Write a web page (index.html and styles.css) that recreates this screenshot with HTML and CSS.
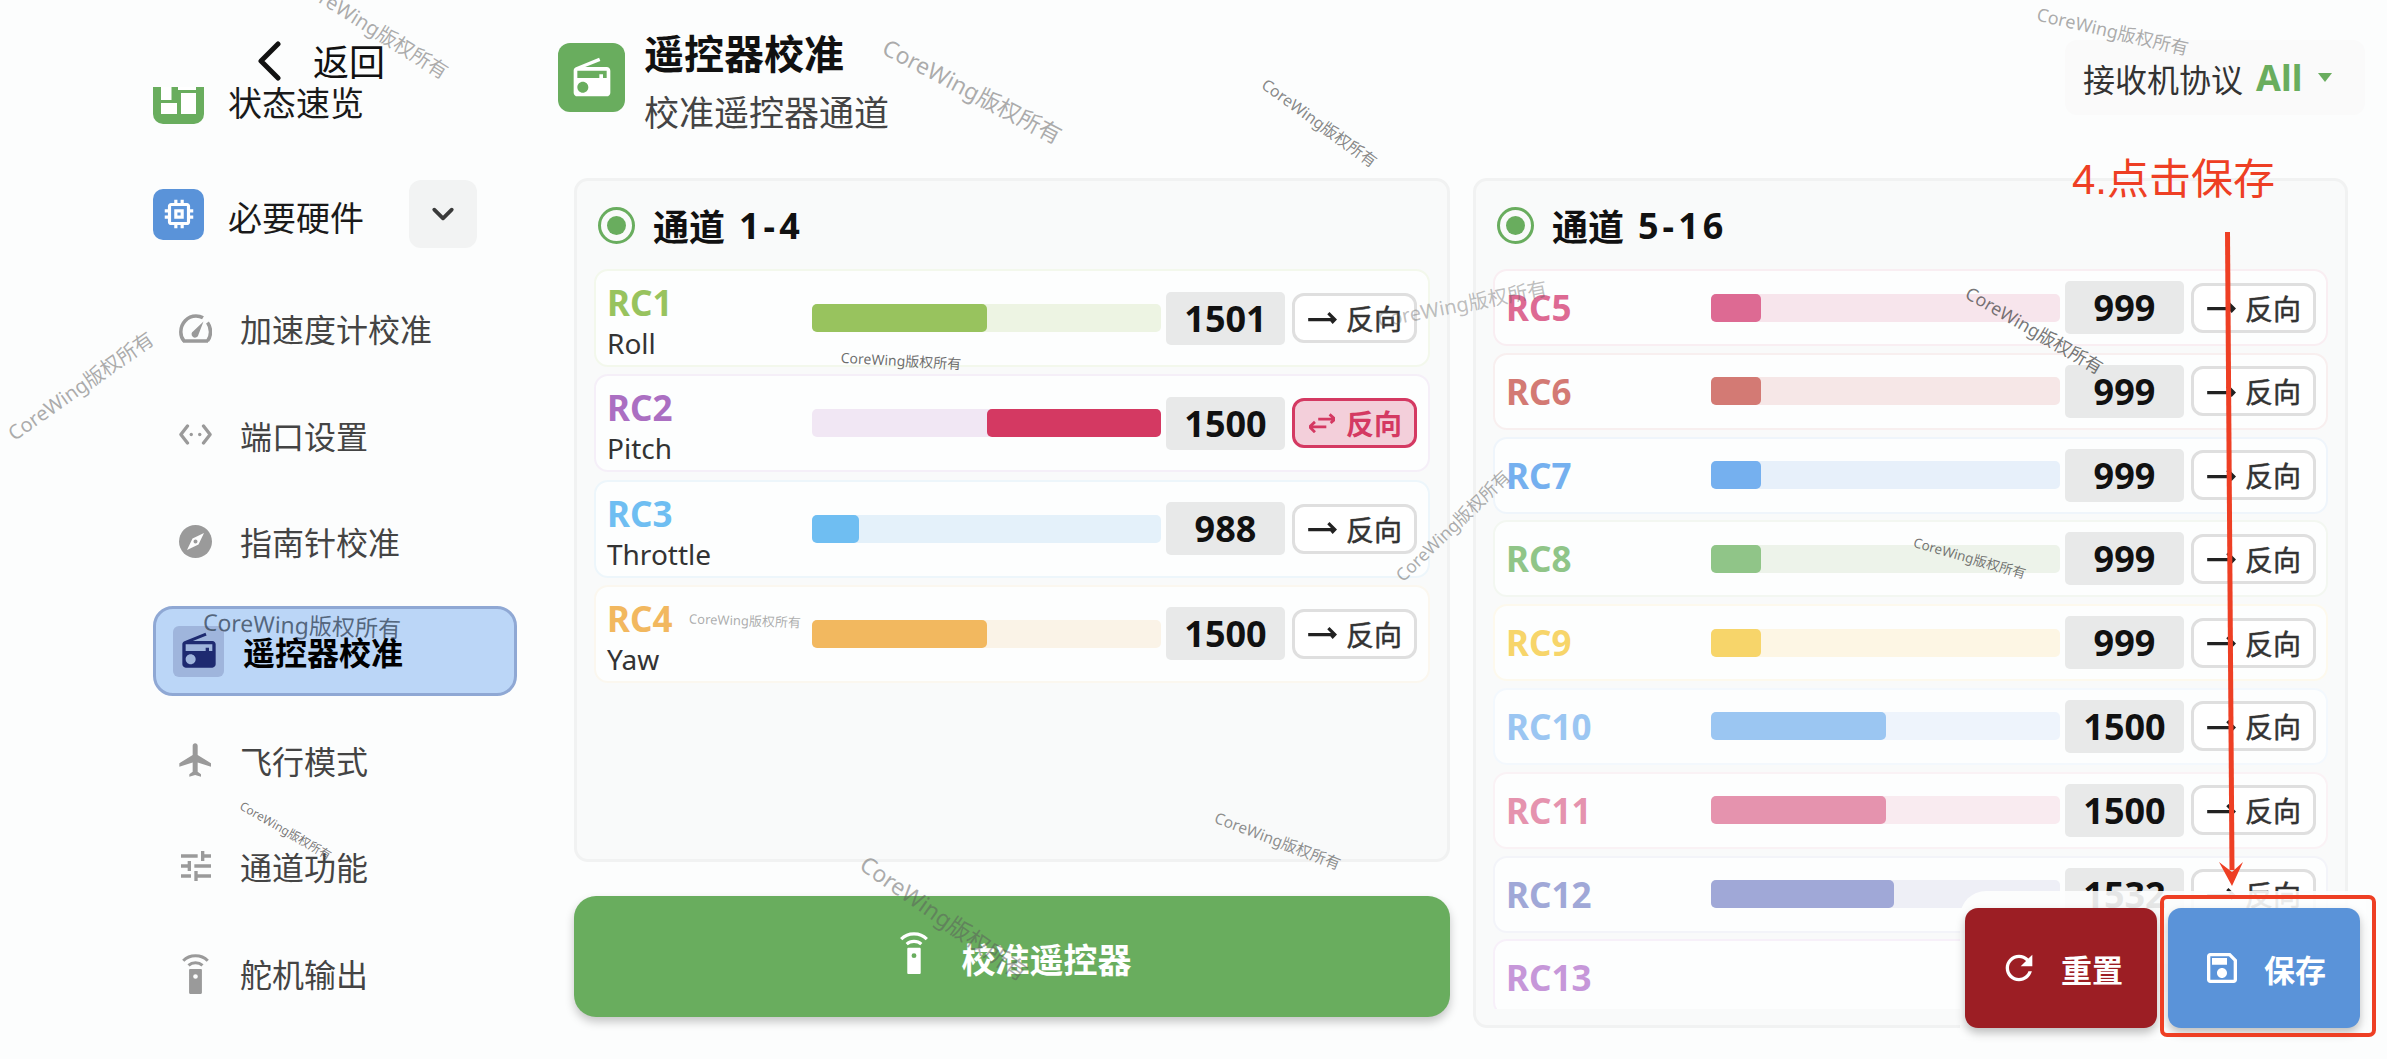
FILE: index.html

```html
<!DOCTYPE html>
<html lang="zh-CN">
<head>
    <meta charset="UTF-8">
    <title>遥控器校准</title>
    <link rel="stylesheet" href="styles.css">
</head>
<body>
<svg class="defs" width="0" height="0">
    <symbol id="radio" viewBox="0 0 24 24"><path fill="currentColor" d="M3.24 6.15C2.51 6.43 2 7.17 2 8v12c0 1.1.89 2 2 2h16c1.11 0 2-.9 2-2V8c0-1.11-.89-2-2-2H8.3l8.26-3.34L15.88 1 3.24 6.15zM7 20c-1.66 0-3-1.34-3-3s1.34-3 3-3 3 1.34 3 3-1.34 3-3 3zm13-8h-2v-2h-2v2H4V8h16v4z"/></symbol>
    <symbol id="remote" viewBox="0 0 24 36"><path fill="currentColor" d="M7.5 14.5h9c.6 0 1 .4 1 1V35c0 .6-.4 1-1 1h-9c-.6 0-1-.4-1-1V15.500c0-.6.4-1 1-1zM12 19a2 2 0 1 0 0 4 2 2 0 0 0 0-4z" fill-rule="evenodd"/><path fill="none" stroke="currentColor" stroke-width="2.6" d="M1.500 7.500C7 1.800 17 1.800 22.500 7.500M6 11.500c3.300-3 8.700-3 12 0"/></symbol>
    <symbol id="arrow" viewBox="0 0 28 16"><path fill="none" stroke="currentColor" stroke-width="3" d="M1 9h25M20 3l6 6-3 3"/></symbol>
</svg>

<div class="app">
    <aside class="sidebar">
        <div class="back">
            <svg class="back-icon" viewBox="0 0 24 40"><path fill="none" stroke="#111" stroke-width="5" stroke-linecap="round" stroke-linejoin="round" d="M21 3 4 20l17 17"/></svg>
            <span>返回</span>
        </div>
        <div class="side-scroll">
            <nav class="side-list">
                <div class="nav-top">
                    <span class="nav-badge green">
                        <svg viewBox="0 0 51 51"><path fill="#fff" d="M8 0h10.500v27H8zM25 0h18v17H25zM8 30h16v11H8zM28 20h15v21H28z"/></svg>
                    </span>
                    <span class="nav-name">状态速览</span>
                </div>
                <div class="nav-top">
                    <span class="nav-badge blue">
                        <svg viewBox="0 0 24 24"><path fill="#fff" d="M15 9H9v6h6V9zm-2 4h-2v-2h2v2zm8-2V9h-2V7c0-1.100-.9-2-2-2h-2V3h-2v2h-2V3H9v2H7c-1.100 0-2 .9-2 2v2H3v2h2v2H3v2h2v2c0 1.100.9 2 2 2h2v2h2v-2h2v2h2v-2h2c1.100 0 2-.9 2-2v-2h2v-2h-2v-2h2zm-4 6H7V7h10v10z"/></svg>
                    </span>
                    <span class="nav-name">必要硬件</span>
                    <span class="nav-toggle">
                        <svg viewBox="0 0 24 24" width="30" height="30"><path fill="none" stroke="#3a3a3a" stroke-width="3" stroke-linecap="round" stroke-linejoin="round" d="m5 8.500 7 7 7-7"/></svg>
                    </span>
                </div>
                <div class="sub-list">
                    <div class="nav-sub">
                        <svg viewBox="0 0 33 30"><path fill="none" stroke="#9a9a9a" stroke-width="3.500" d="M5 27.500C2.800 25 1.800 22 1.800 18.500 1.800 9.800 8.500 2.500 17 2.500c3 0 5 .6 7 1.800M28.500 9c1.800 2.500 3 5.800 3 9.500 0 3.500-1 6.500-3 9M4 27.500h25"/><path fill="#9a9a9a" d="M24.500 8 19.500 21a3.500 3.500 0 1 1-5-3.500z"/></svg>
                        <span>加速度计校准</span>
                    </div>
                    <div class="nav-sub">
                        <svg viewBox="0 0 35 24"><path fill="none" stroke="#9a9a9a" stroke-width="3.500" stroke-linecap="round" stroke-linejoin="round" d="M9 3 2 12l7 9M26 3l7 9-7 9"/><circle cx="13" cy="12" r="1.800" fill="#9a9a9a"/><circle cx="22" cy="12" r="1.800" fill="#9a9a9a"/></svg>
                        <span>端口设置</span>
                    </div>
                    <div class="nav-sub">
                        <svg viewBox="0 0 33 33"><circle cx="16.500" cy="16.500" r="16.500" fill="#9a9a9a"/><path fill="#fdfdfd" d="M25 8 19.500 19.500 8 25l5.500-11.500zM16.500 14.500a2 2 0 1 0 0 4 2 2 0 0 0 0-4z" fill-rule="evenodd"/></svg>
                        <span>指南针校准</span>
                    </div>
                    <div class="nav-sub active">
                        <span class="active-badge"><svg><use href="#radio"/></svg></span>
                        <span>遥控器校准</span>
                    </div>
                    <div class="nav-sub">
                        <svg class="big" viewBox="0 0 24 24"><path fill="#9a9a9a" d="M21 16v-2l-8-5V3.500c0-.83-.67-1.500-1.500-1.500S10 2.670 10 3.500V9l-8 5v2l8-2.500V19l-2 1.500V22l3.500-1 3.500 1v-1.500L13 19v-5.500l8 2.500z"/></svg>
                        <span>飞行模式</span>
                    </div>
                    <div class="nav-sub">
                        <svg class="big" viewBox="0 0 24 24"><path fill="#9a9a9a" d="M3 17v2h6v-2H3zM3 5v2h10V5H3zm10 16v-2h8v-2h-8v-2h-2v6h2zM7 9v2H3v2h4v2h2V9H7zm14 4v-2H11v2h10zm-6-4h2V7h4V5h-4V3h-2v6z"/></svg>
                        <span>通道功能</span>
                    </div>
                    <div class="nav-sub">
                        <svg class="remote-gray"><use href="#remote"/></svg>
                        <span>舵机输出</span>
                    </div>
                </div>
            </nav>
        </div>
    </aside>

    <main class="main">
        <header class="page-head">
            <div class="head-left">
                <span class="head-badge"><svg><use href="#radio"/></svg></span>
                <div class="head-text">
                    <h1>遥控器校准</h1>
                    <p>校准遥控器通道</p>
                </div>
            </div>
            <div class="protocol">
                <span>接收机协议</span>
                <b>All</b>
                <i class="caret"></i>
            </div>
        </header>

        <div class="columns">
            <div class="col-left">
                <section class="panel panel-left">
                    <h2 class="panel-title"><span class="ring"></span>通道<span class="nums">1-4</span></h2>
                    <div class="rows rows-main">
                        <div class="row rc1 tall">
                            <div class="label"><b>RC1</b><span>Roll</span></div>
                            <div class="track"><div class="fill" style="width:50%"></div></div>
                            <div class="value">1501</div>
                            <div class="rev-btn"><svg class="arrow"><use href="#arrow"/></svg>反向</div>
                        </div>
                        <div class="row rc2 tall">
                            <div class="label"><b>RC2</b><span>Pitch</span></div>
                            <div class="track flipped"><div class="fill" style="width:50%"></div></div>
                            <div class="value">1500</div>
                            <div class="rev-btn on">
                                <svg class="arrow" viewBox="0 0 24 18"><path fill="none" stroke="currentColor" stroke-width="2.600" d="M8.500 5.500H24M19 1l5 4.500-4 3.500M.5 12.500H16M5.500 8 .5 12.500l5 5"/></svg>反向
                            </div>
                        </div>
                        <div class="row rc3 tall">
                            <div class="label"><b>RC3</b><span>Throttle</span></div>
                            <div class="track"><div class="fill" style="width:13.400%"></div></div>
                            <div class="value">988</div>
                            <div class="rev-btn"><svg class="arrow"><use href="#arrow"/></svg>反向</div>
                        </div>
                        <div class="row rc4 tall">
                            <div class="label"><b>RC4</b><span>Yaw</span></div>
                            <div class="track"><div class="fill" style="width:50%"></div></div>
                            <div class="value">1500</div>
                            <div class="rev-btn"><svg class="arrow"><use href="#arrow"/></svg>反向</div>
                        </div>
                    </div>
                </section>
                <div class="calibrate"><svg><use href="#remote"/></svg><span>校准遥控器</span></div>
            </div>

            <section class="panel panel-right">
                <h2 class="panel-title"><span class="ring"></span>通道<span class="nums">5-16</span></h2>
                <div class="rows rows-scroll">
                    <div class="row rc5"><div class="label"><b>RC5</b></div><div class="track"><div class="fill" style="width:14.200%"></div></div><div class="value">999</div><div class="rev-btn"><svg class="arrow"><use href="#arrow"/></svg>反向</div></div>
                    <div class="row rc6"><div class="label"><b>RC6</b></div><div class="track"><div class="fill" style="width:14.200%"></div></div><div class="value">999</div><div class="rev-btn"><svg class="arrow"><use href="#arrow"/></svg>反向</div></div>
                    <div class="row rc7"><div class="label"><b>RC7</b></div><div class="track"><div class="fill" style="width:14.200%"></div></div><div class="value">999</div><div class="rev-btn"><svg class="arrow"><use href="#arrow"/></svg>反向</div></div>
                    <div class="row rc8"><div class="label"><b>RC8</b></div><div class="track"><div class="fill" style="width:14.200%"></div></div><div class="value">999</div><div class="rev-btn"><svg class="arrow"><use href="#arrow"/></svg>反向</div></div>
                    <div class="row rc9"><div class="label"><b>RC9</b></div><div class="track"><div class="fill" style="width:14.200%"></div></div><div class="value">999</div><div class="rev-btn"><svg class="arrow"><use href="#arrow"/></svg>反向</div></div>
                    <div class="row rc10"><div class="label"><b>RC10</b></div><div class="track"><div class="fill" style="width:50%"></div></div><div class="value">1500</div><div class="rev-btn"><svg class="arrow"><use href="#arrow"/></svg>反向</div></div>
                    <div class="row rc11"><div class="label"><b>RC11</b></div><div class="track"><div class="fill" style="width:50%"></div></div><div class="value">1500</div><div class="rev-btn"><svg class="arrow"><use href="#arrow"/></svg>反向</div></div>
                    <div class="row rc12"><div class="label"><b>RC12</b></div><div class="track"><div class="fill" style="width:52.400%"></div></div><div class="value">1532</div><div class="rev-btn"><svg class="arrow"><use href="#arrow"/></svg>反向</div></div>
                    <div class="row rc13"><div class="label"><b>RC13</b></div><div class="track"><div class="fill" style="width:5.700%"></div></div></div>
                </div>
            </section>
        </div>
    </main>

    <div class="action-bar">
        <div class="action reset">
            <svg viewBox="0 0 24 24" width="40" height="40"><path fill="#fff" d="M17.65 6.35C16.2 4.9 14.21 4 12 4c-4.42 0-7.99 3.58-7.99 8s3.57 8 7.99 8c3.73 0 6.84-2.55 7.73-6h-2.08c-.82 2.33-3.04 4-5.65 4-3.31 0-6-2.69-6-6s2.69-6 6-6c1.66 0 3.14.69 4.22 1.78L13 11h7V4l-2.35 2.35z"/></svg>
            重置
        </div>
        <div class="action save">
            <svg viewBox="0 0 24 24" width="40" height="40"><path fill="#fff" d="M17 3H5c-1.11 0-2 .9-2 2v14c0 1.1.89 2 2 2h14c1.1 0 2-.9 2-2V7l-4-4zm2 16H5V5h11.170L19 7.830V19zm-7-7c-1.660 0-3 1.340-3 3s1.340 3 3 3 3-1.340 3-3-1.340-3-3-3zM6 6h9v4H6z"/></svg>
            保存
        </div>
    </div>

    <!-- 标注 -->
    <div class="note-text">4.点击保存</div>
    <svg class="note-arrow" viewBox="0 0 2387 1059">
        <path fill="none" stroke="#ee3f24" stroke-width="5" d="M2227.500 232 2232 870"/>
        <path fill="#ee3f24" d="M2219 862 2232 872 2243 862 2232 886z"/>
    </svg>
    <div class="note-box"></div>

    <!-- 水印 -->
    <span class="wm wm-a">CoreWing版权所有</span>
    <span class="wm wm-b">CoreWing版权所有</span>
    <span class="wm wm-c">CoreWing版权所有</span>
    <span class="wm wm-d">CoreWing版权所有</span>
    <span class="wm wm-e">CoreWing版权所有</span>
    <span class="wm wm-f">CoreWing版权所有</span>
    <span class="wm wm-g">CoreWing版权所有</span>
    <span class="wm wm-h">CoreWing版权所有</span>
    <span class="wm wm-i">CoreWing版权所有</span>
    <span class="wm wm-j">CoreWing版权所有</span>
    <span class="wm wm-k">CoreWing版权所有</span>
    <span class="wm wm-l">CoreWing版权所有</span>
    <span class="wm wm-m">CoreWing版权所有</span>
    <span class="wm wm-n">CoreWing版权所有</span>
    <span class="wm wm-o">CoreWing版权所有</span>
</div>
</body>
</html>
```

FILE: styles.css

```css
* { box-sizing: border-box; }
html, body { margin: 0; height: 100%; overflow: hidden; }
body { background: #fcfdfd; color: #1a1a1a; font-family: "Noto Sans", "Noto Sans CJK SC", sans-serif; }
.defs { position: absolute; }
.app { position: relative; display: flex; width: 2387px; height: 1059px; overflow: hidden; }

/* sidebar */
.sidebar { width: 558px; flex: none; padding-left: 153px; }
.back { display: flex; align-items: center; height: 87px; padding: 39px 0 0 104px; font-size: 36px; line-height: 46px; color: #111; gap: 32px; }
.back-icon { width: 24px; height: 40px; margin-top: -4px; }
.side-scroll { height: 972px; overflow: hidden; }
.side-list { width: 364px; margin-top: -14px; }
.nav-top { display: flex; align-items: center; height: 51px; margin-bottom: 64.500px; font-size: 34px; color: #1a1a1a; gap: 24px; position: relative; }
.nav-name { margin-top: 5px; }
.nav-badge { display: flex; align-items: center; justify-content: center; width: 51px; height: 51px; border-radius: 10px; }
.nav-badge svg { width: 51px; height: 51px; }
.nav-badge.green { background: #69ad5e; }
.nav-badge.blue { background: #5a93d9; }
.nav-badge.blue svg { width: 38px; height: 38px; }
.nav-toggle { display: flex; align-items: center; justify-content: center; width: 68px; height: 68px; margin-left: 21px; border-radius: 12px; background: #f2f3f3; }
.sub-list { display: flex; flex-direction: column; gap: 16.700px; margin-top: -21px; }
.nav-sub { display: flex; align-items: center; height: 90px; padding-left: 26px; font-size: 32px; color: #444; gap: 28px; }
.nav-sub > svg { width: 33px; height: 33px; flex: none; }
.nav-sub > svg.big { width: 40px; height: 40px; margin: 0 -3.500px; }
.nav-sub .remote-gray { color: #9a9a9a; height: 42px; }
.nav-sub.active { margin: 3px 0 2px; padding-left: 17px; gap: 19px; border: 3px solid #8fa8d4; border-radius: 20px; background: #bbd6f7; color: #000; font-weight: 700; }
.active-badge { display: flex; align-items: center; justify-content: center; width: 51px; height: 51px; border-radius: 6px; background: #9fb5dc; color: #1e2a70; }
.active-badge svg { width: 40px; height: 40px; }

/* header */
.main { flex: 1; min-width: 0; padding: 40px 22px 0 16px; }
.page-head { display: flex; justify-content: space-between; height: 138px; }
.head-left { display: flex; align-items: center; gap: 19px; height: 75px; }
.head-badge { display: flex; align-items: center; justify-content: center; width: 67px; height: 69px; border-radius: 12px; background: #69ad5e; color: #fff; margin-left: -16px; }
.head-badge svg { width: 44px; height: 44px; }
.head-text { margin-top: 8px; }
.head-text h1 { margin: 0; font-size: 40px; line-height: 52px; font-weight: 700; color: #111; }
.head-text p { margin: 10px 0 0; font-size: 35px; line-height: 46px; color: #444; }
.protocol { display: flex; align-items: center; width: 300px; height: 75px; padding-left: 18px; font-size: 32px; color: #333; border-radius: 12px; background: #fafafa; }
.protocol b { margin-left: 13px; font-size: 36px; color: #69ad5e; font-weight: 700; }
.caret { width: 0; height: 0; margin-left: 16px; border: 7px solid transparent; border-top: 9px solid #69ad5e; border-bottom: 0; }

/* panels */
.columns { display: grid; grid-template-columns: 876px 875px; gap: 23px; }
.col-left { display: flex; flex-direction: column; gap: 34px; }
.panel { border: 3px solid #f1f2f2; border-radius: 14px; background: #f9fafa; padding: 0 17px; }
.panel-left { height: 684px; }
.panel-right { height: 850px; }
.panel-title { display: flex; align-items: center; margin: 0; height: 88px; padding: 0 0 0 4px; gap: 18px; font-size: 36px; font-weight: 700; color: #111; }
.nums { margin-left: -4px; letter-spacing: 4px; }
.ring { position: relative; flex: none; width: 37px; height: 37px; border: 3px solid #69ad5e; border-radius: 50%; }
.ring::after { content: ""; position: absolute; inset: 6px; border-radius: 50%; background: #69ad5e; }
.rows { display: flex; flex-direction: column; }
.rows-main { gap: 7.300px; }
.rows-scroll { gap: 6.800px; height: 740px; overflow: hidden; }
.row { display: flex; flex: none; align-items: center; gap: 7px; height: 77px; padding: 0 11px 0 11px; border: 2px solid color-mix(in srgb, var(--t) 65%, #fdfefe); border-radius: 14px; background: #fdfefe; }
.rows-scroll .row { padding-right: 10px; }
.row.tall { height: 98px; }
.label { flex: 1; min-width: 0; }
.label b { display: block; font-size: 35px; line-height: 41px; font-weight: 700; color: var(--c); }
.label span { display: block; font-size: 28px; line-height: 41px; color: #333; }
.tall .label { margin-top: 10px; }
.track { display: flex; flex: none; width: 349px; height: 28px; margin: 0 -2px 0 2px; border-radius: 5px; background: var(--t); }
.track.flipped { justify-content: flex-end; }
.fill { border-radius: 5px; background: var(--c); }
.value { flex: none; width: 119px; height: 53px; border-radius: 5px; background: #e8e9e9; font-size: 36px; line-height: 53px; font-weight: 700; text-align: center; color: #111; }
.rev-btn { display: flex; flex: none; align-items: center; justify-content: center; width: 125px; height: 50px; gap: 9px; border: 3px solid #dfdfdf; border-radius: 12px; background: #fff; font-size: 28px; color: #333; -webkit-text-stroke: .5px #333; }
.rev-btn .arrow { width: 30px; height: 17px; color: #222; }
.rev-btn.on { border-color: #d43962; background: #f3cfda; color: #d43962; font-weight: 700; -webkit-text-stroke: 0; }
.rev-btn.on .arrow { width: 26px; height: 20px; margin: 0 2px; color: #d43962; }

/* channel colours */
.rc1 { --c: #98c35e; --t: #edf4e3; }
.rc2 { --c: #d43962; --t: #f1e7f4; }
.rc2 .label b { color: #ab6fc2; }
.rc3 { --c: #6fbef2; --t: #e4f1fa; }
.rc4 { --c: #f2b85f; --t: #faf3e7; }
.rc5 { --c: #dd6a93; --t: #f7e5ec; }
.rc6 { --c: #d37a74; --t: #f6e7e7; }
.rc7 { --c: #75b0ef; --t: #e7f0fa; }
.rc8 { --c: #90c588; --t: #edf3ea; }
.rc9 { --c: #f7d56a; --t: #fdf6e4; }
.rc10 { --c: #9bc6f2; --t: #eef4fc; }
.rc11 { --c: #e593ae; --t: #f9ebf0; }
.rc12 { --c: #a0a8d7; --t: #eeeff6; }
.rc13 { --c: #c697d9; --t: #f3e9f7; }

.calibrate { display: flex; align-items: center; justify-content: center; height: 121px; padding-left: 6px; gap: 33px; border-radius: 22px; background: #69ad5e; box-shadow: 0 5px 10px rgba(0, 0, 0, .22); color: #fff; font-size: 34px; font-weight: 700; }
.calibrate span { margin-top: 3px; }
.calibrate svg { width: 30px; height: 44px; margin-top: -10px; }

/* floating save bar */
.action-bar { position: absolute; left: 1960px; top: 891px; display: flex; width: 406px; height: 148px; padding: 17px 0 0 5px; gap: 11px; border-top-left-radius: 26px; background: rgba(253, 254, 254, .9); }
.action { display: flex; align-items: center; justify-content: center; width: 192px; height: 120px; gap: 22px; border-radius: 13px; color: #fff; font-size: 31px; font-weight: 700; box-shadow: 0 5px 10px rgba(0, 0, 0, .25); }
.action.reset { background: #9c1e24; }
.action.save { background: #5a93d9; }

/* annotation */
.note-text { position: absolute; left: 2072px; top: 151px; font-family: "Liberation Sans", "Noto Sans CJK SC", sans-serif; font-size: 42px; line-height: 58px; color: #ee3f24; white-space: nowrap; }
.note-arrow { position: absolute; left: 0; top: 0; width: 2387px; height: 1059px; pointer-events: none; }
.note-box { position: absolute; left: 2160px; top: 895px; width: 216px; height: 142px; border: 4px solid #ee3f24; border-radius: 7px; }

/* watermarks */
.wm { position: absolute; white-space: nowrap; pointer-events: none; color: rgba(90, 90, 90, .5); transform: translate(-50%, -50%) rotate(var(--r)); }
.wm-a { left: 374px; top: 27px; font-size: 20px; --r: 32deg; }
.wm-b { left: 80px; top: 385px; font-size: 20px; --r: -35deg; }
.wm-c { left: 973px; top: 90px; font-size: 23px; --r: 27.600deg; }
.wm-d { left: 1320px; top: 122px; font-size: 16px; --r: 36deg; color: rgba(70, 70, 70, .65); }
.wm-e { left: 2113px; top: 30px; font-size: 18px; --r: 13deg; }
.wm-f { left: 901px; top: 360px; font-size: 14px; --r: 3deg; color: rgba(60, 60, 60, .75); }
.wm-g { left: 745px; top: 620px; font-size: 13px; --r: 2deg; }
.wm-h { left: 1462px; top: 303px; font-size: 20px; --r: -11deg; color: rgba(90, 90, 90, .4); }
.wm-i { left: 1452px; top: 525px; font-size: 17.500px; --r: -44deg; }
.wm-j { left: 2035px; top: 329px; font-size: 18px; --r: 30deg; color: rgba(60, 60, 60, .7); }
.wm-k { left: 1970px; top: 557px; font-size: 13.500px; --r: 16deg; color: rgba(60, 60, 60, .7); }
.wm-l { left: 1278px; top: 840px; font-size: 15.500px; --r: 21deg; color: rgba(70, 70, 70, .6); }
.wm-m { left: 945px; top: 917px; font-size: 23px; --r: 35deg; }
.wm-n { left: 302px; top: 624px; font-size: 23px; --r: 2deg; color: rgba(50, 65, 85, .75); }
.wm-o { left: 286px; top: 830px; font-size: 12px; --r: 30deg; color: rgba(60, 60, 60, .7); }
```
